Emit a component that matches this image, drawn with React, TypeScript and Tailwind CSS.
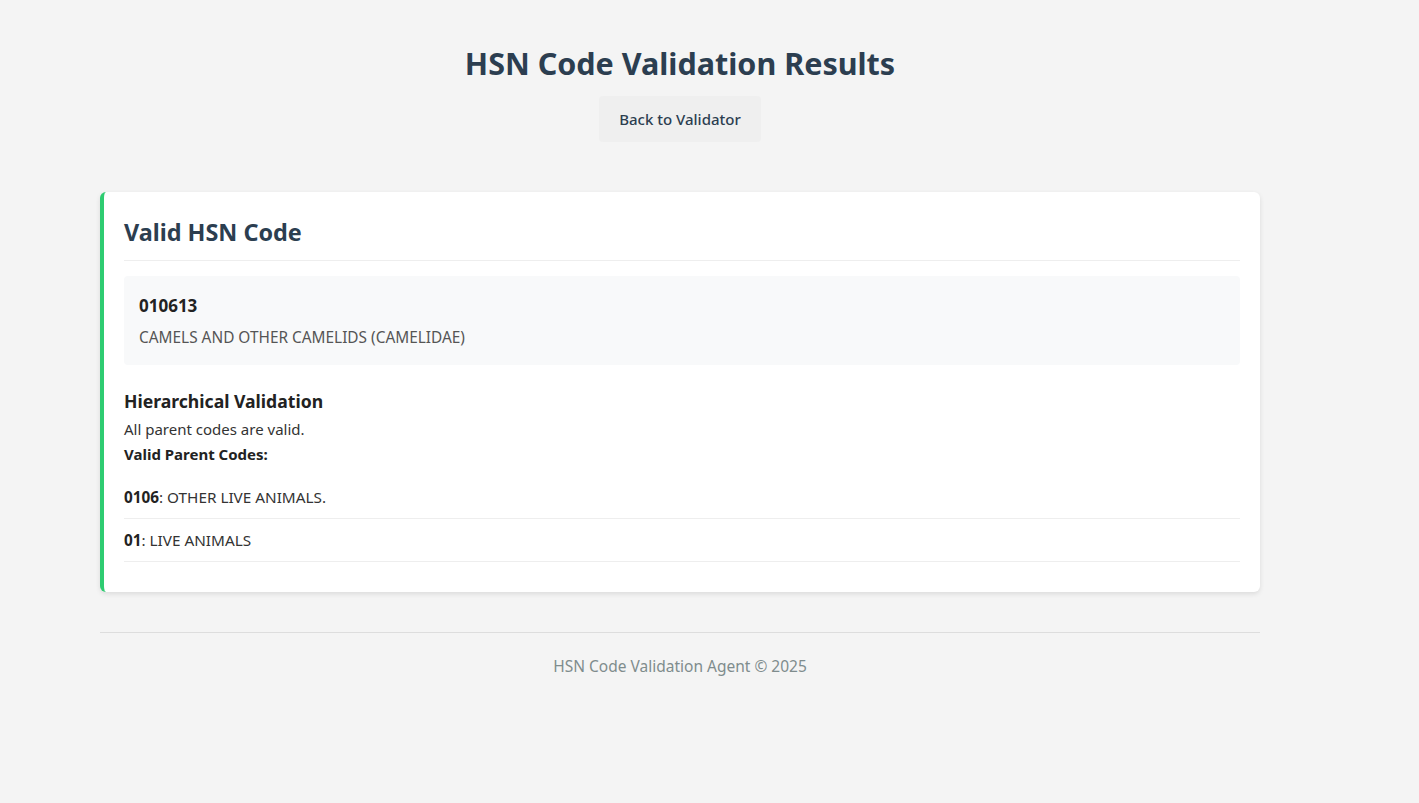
export default function App() {
  const font = { fontFamily: '"Segoe UI", "Noto Sans", "Open Sans", sans-serif' };
  return (
    <div className="min-h-[803px] bg-[#f4f4f4] text-[#333]" style={font}>
      <div className="ml-[100px] w-[1160px]">
        <header className="flex flex-col items-center pt-[43px]">
          <h1 className="text-[30.5px] font-bold leading-[40px] text-[#2c3e50]">HSN Code Validation Results</h1>
          <button className="mt-[13px] h-[46px] w-[162px] rounded bg-[#efefef] text-[15px] font-medium text-[#2c3e50]">
            Back to Validator
          </button>
        </header>

        <div className="mt-[50px] rounded-md border-l-4 border-[#2ecc71] bg-white px-5 pb-[30px] pt-5 shadow-[0_2px_5px_rgba(0,0,0,0.1)]">
          <h2 className="border-b border-[#eee] pb-2 text-[23.4px] font-bold leading-[40px] text-[#2c3e50]">Valid HSN Code</h2>
          <div className="mt-[15px] rounded bg-[#f8f9fa] px-[15px] py-[15px]">
            <h3 className="text-[17px] font-bold leading-[30px] text-[#222]">010613</h3>
            <p className="mt-[5px] text-[15.4px] leading-[24px] text-[#555]">CAMELS AND OTHER CAMELIDS (CAMELIDAE)</p>
          </div>
          <h3 className="mt-[20px] text-[17.6px] font-bold leading-[32px] text-[#222]">Hierarchical Validation</h3>
          <p className="text-[15px] leading-[24px]">All parent codes are valid.</p>
          <p className="mt-[1px] text-[15px] font-bold leading-[24px] text-[#222]">Valid Parent Codes:</p>
          <ul className="mt-[10px]">
            <li className="border-b border-[#eee] py-[9px] text-[15.3px] leading-[24px]">
              <strong className="text-[#222]">0106</strong>: OTHER LIVE ANIMALS.
            </li>
            <li className="border-b border-[#eee] py-[9px] text-[15.3px] leading-[24px]">
              <strong className="text-[#222]">01</strong>: LIVE ANIMALS
            </li>
          </ul>
        </div>

        <footer className="mt-10 border-t border-[#ddd] pt-[21px] text-center text-[15.5px] leading-[24px] text-[#7f8c8d]">
          HSN Code Validation Agent © 2025
        </footer>
      </div>
    </div>
  );
}
